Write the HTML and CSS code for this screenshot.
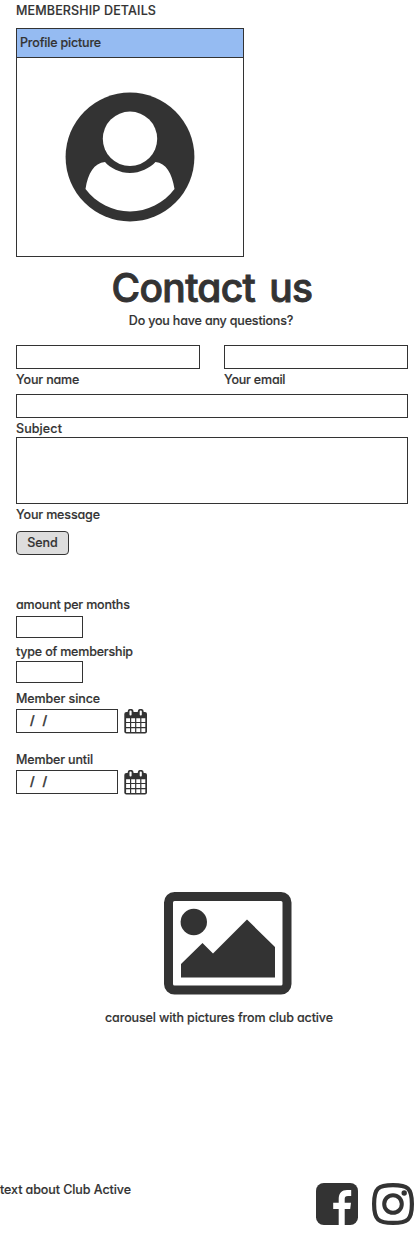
FILE: index.html
```html
<!DOCTYPE html>
<html lang="en">
<head>
<meta charset="utf-8">
<title>Membership details</title>
<link rel="stylesheet" href="styles.css">
</head>
<body>
<main class="page">
  <h2 class="page-title"><span>MEMBERSHIP DETAILS</span></h2>
  <section class="card">
    <header class="card-header">Profile picture</header>
    <div class="card-body">
      <svg class="avatar" viewBox="0 0 130 130" width="130" height="130">
        <circle cx="65" cy="65" r="64.4" fill="#333"/>
        <circle cx="65" cy="46.8" r="27.2" fill="#fff"/>
        <path fill="#fff" d="M40 70C45 76 55 81 65 81C75 81 85 76 90.500 70C101 71 107 81 109.500 97C99 111 82 119.500 65 119.500C48 119.500 31 111 20.500 97C23 81 29 71 40 70Z"/>
      </svg>
    </div>
  </section>

  <section class="contact">
    <h1 class="contact-title">Contact us</h1>
    <p class="contact-sub">Do you have any questions?</p>
    <form class="form">
      <div class="form-row">
        <div class="field"><div class="box"></div><label class="t-name">Your name</label></div>
        <div class="field"><div class="box"></div><label class="t-email">Your email</label></div>
      </div>
      <div class="field subject"><div class="box"></div><label class="t-subject">Subject</label></div>
      <div class="field message"><div class="box area"></div><label class="t-message">Your message</label></div>
      <button class="send" type="button">Send</button>
    </form>
  </section>

  <section class="membership">
    <label class="t-amount">amount per months</label>
    <div class="box small amount"></div>
    <label class="t-type">type of membership</label>
    <div class="box small type"></div>
    <label class="t-since">Member since</label>
    <div class="date-row">
      <div class="box date"><span>/</span><span>/</span></div>
      <svg class="calendar" viewBox="0 0 24 25" width="24" height="25"><use href="#cal"/></svg>
    </div>
    <label class="t-until">Member until</label>
    <div class="date-row">
      <div class="box date"><span>/</span><span>/</span></div>
      <svg class="calendar" viewBox="0 0 24 25" width="24" height="25">
        <g id="cal">
          <rect x="0.300" y="3" width="22.700" height="21.600" rx="2" fill="#333"/>
          <rect x="3.700" y="-0.100" width="5.800" height="8" rx="2.700" fill="#333"/>
          <rect x="13.800" y="-0.100" width="5.800" height="8" rx="2.700" fill="#333"/>
          <rect x="5.500" y="1.600" width="2.100" height="4.900" rx="1" fill="#fff"/>
          <rect x="15.700" y="1.600" width="2.100" height="4.900" rx="1" fill="#fff"/>
          <path fill="#fff" d="M2.100 9.200h3.900v3.700H2.100zM7.200 9.200h3.900v3.700H7.200zM12.300 9.200h3.900v3.700h-3.900zM17.400 9.200h3.900v3.700h-3.900zM2.100 14.100h3.900v3.900H2.100zM7.200 14.100h3.900v3.900H7.200zM12.300 14.100h3.900v3.900h-3.900zM17.400 14.100h3.900v3.900h-3.900zM2.100 19.200h3.900v3.700H2.100zM7.200 19.200h3.900v3.700H7.200zM12.300 19.200h3.900v3.700h-3.900zM17.400 19.200h3.900v3.700h-3.900z"/>
        </g>
      </svg>
    </div>
  </section>

  <section class="carousel">
    <svg class="picture" viewBox="0 0 128 103" width="128" height="103">
      <rect x="4.500" y="4.500" width="118.500" height="93.500" rx="6" fill="#fff" stroke="#333" stroke-width="9"/>
      <circle cx="29.800" cy="30" r="13.200" fill="#333"/>
      <path fill="#333" d="M17 85.500V72L38.500 51L49 61.500L83 27.500L111 55V85.500Z"/>
    </svg>
    <p class="t-carousel">carousel with pictures from club active</p>
  </section>

  <footer class="footer">
    <p class="t-footer">text about Club Active</p>
    <div class="social">
      <svg viewBox="0 0 42 42" width="42" height="42">
        <rect width="42" height="42" rx="7.800" fill="#333"/>
        <path fill="#fff" d="M22.700 42V26H17.200V19.700H22.700V16C22.700 10 26 7 31 7H35.200V13H32C29.500 13 28.700 14 28.700 16V19.700H35L34.200 26H28.700V42Z"/>
      </svg>
      <svg viewBox="0 0 42 42" width="42" height="42">
        <path fill="none" stroke="#333" stroke-width="4.200" d="M21 2.100C35.500 2.100 39.900 5 39.900 21C39.900 37 35.500 39.900 21 39.900C6.500 39.900 2.100 37 2.100 21C2.100 5 6.500 2.100 21 2.100Z"/>
        <circle cx="21" cy="21" r="8.800" fill="none" stroke="#333" stroke-width="4"/>
        <circle cx="32.200" cy="10" r="2.700" fill="#333"/>
      </svg>
    </div>
  </footer>
</main>
</body>
</html>
```
FILE: styles.css
```css
* { box-sizing: border-box; }
body {
  margin: 0;
  background: #fff;
  color: #333;
  font: 500 12.5px/16px Inter, "Open Sans", sans-serif;
  font-feature-settings: "cv11";
  letter-spacing: -0.14px;
  -webkit-text-stroke: 0.15px #333;
}
h1, h2, p { margin: 0; font: inherit; }
label { display: block; white-space: nowrap; }
svg { display: block; flex: none; }
.page { height: 1259px; padding: 3px 0 0 16px; overflow: hidden; }
.page-title { letter-spacing: 0.15px; }

.card { width: 228px; height: 229px; margin-top: 9px; border: 1px solid #333; display: flex; flex-direction: column; }
.card-header { height: 29px; padding: 6px 3px; letter-spacing: -0.18px; background: #95bbf2; border-bottom: 1px solid #333; }
.card-body { flex: 1; display: flex; justify-content: center; align-items: center; }

.contact { width: 392px; }
.contact-title {
  margin-top: 11px; font-size: 39px; line-height: 40px; font-weight: 500; text-align: center;
  letter-spacing: -0.7px; word-spacing: 4.5px; -webkit-text-stroke: 0.9px #333;
}
.contact-sub { margin-top: 5px; padding-right: 2px; text-align: center; letter-spacing: -0.17px; }
.form { margin-top: 16px; }
.form-row { display: flex; gap: 24px; }
.field { flex: 1; }
.box { height: 24px; border: 1px solid #333; background: #fff; }
.field label { margin-top: 3px; }
.t-email { letter-spacing: -0.2px; }
.t-subject { letter-spacing: 0.1px; }
.subject { margin-top: 6px; }
.area { height: 67px; }
.send {
  display: block; width: 53px; height: 24px; margin-top: 8px; padding: 0 0 1px;
  border: 1px solid #333; border-radius: 4px; background: #ddd;
  color: inherit; font: inherit; font-feature-settings: inherit;
}

.membership { margin-top: 42px; }
.t-amount, .t-type { letter-spacing: -0.19px; }
.t-since, .t-footer { letter-spacing: -0.08px; }
.small { width: 67px; height: 22px; }
.amount { margin: 3px 0 6px; }
.type { margin: 1px 0 8px; }
.date-row { display: flex; gap: 6px; margin: 2px 0 18px; height: 25px; }
.date { width: 102px; padding: 3px 0 0 13px; display: flex; gap: 8px; -webkit-text-stroke: 0.4px #333; }

.carousel { margin-top: 97px; }
.picture { margin-left: 148px; }
.carousel p { margin: 15px 0 0 89px; white-space: nowrap; letter-spacing: -0.12px; }

.footer { display: flex; justify-content: space-between; margin: 156px 3.5px 0 -16px; }
.social { display: flex; gap: 14px; margin-top: 1px; }
```
